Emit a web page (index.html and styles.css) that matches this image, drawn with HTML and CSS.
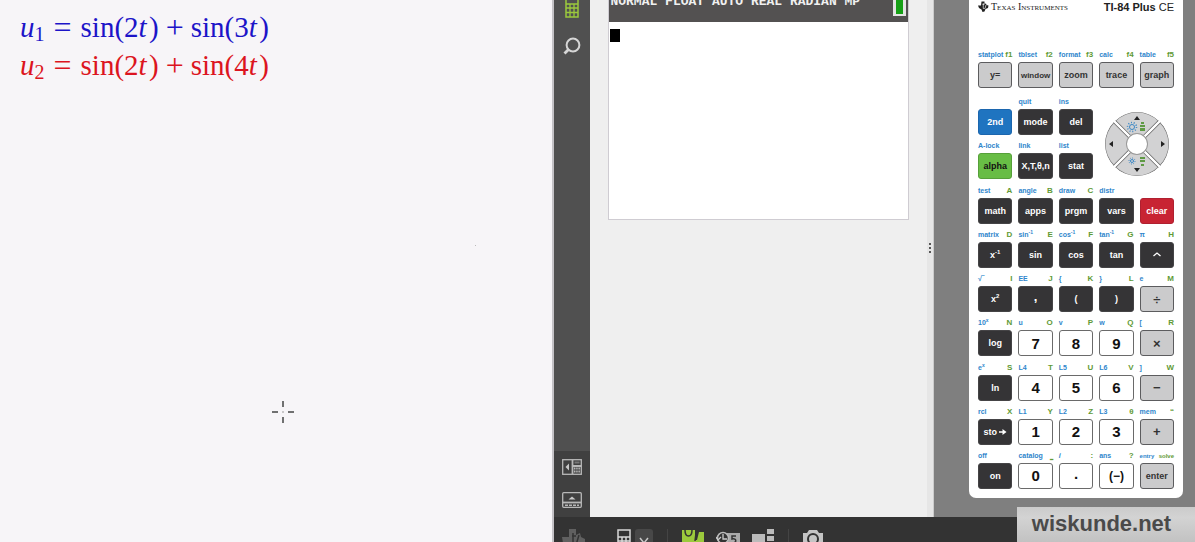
FILE: index.html
```html
<!DOCTYPE html>
<html lang="nl">
<head>
  <meta charset="UTF-8" />
  <title>TI-84 Plus CE - wiskunde.net</title>
  <link rel="stylesheet" href="styles.css">
</head>
<body>
  <!-- Notes -->
  <div class="notes">
    <div class="formula blue">
      <span><i>u</i><sub>1</sub></span><span class="op">=</span><span>sin(2<i>t</i>&#8202;)</span><span class="op plus">+</span><span>sin(3<i>t</i>&#8202;)</span>
    </div>
    <div class="formula red">
      <span><i>u</i><sub>2</sub></span><span class="op">=</span><span>sin(2<i>t</i>&#8202;)</span><span class="op plus">+</span><span>sin(4<i>t</i>&#8202;)</span>
    </div>
    <svg class="crosshair" width="24" height="24" viewBox="0 0 24 24">
      <path d="M12 1v6M12 17v6M1 12h6M17 12h6" stroke="#444" stroke-width="1.5" />
      <circle cx="12" cy="12" r="0.7" fill="#777" />
    </svg>
    <span class="speck"></span>
  </div>

  <!-- Emulator -->
  <div class="emulator">
    <div class="work">
      <div class="sidebar">
        <button class="tool" aria-label="Calculator">
          <svg width="16" height="28" viewBox="0 0 16 28" fill="none" stroke="#9bc93c" stroke-width="1.5">
            <rect x="2" y="1" width="12" height="26" />
            <path d="M2 14h12M2 18h12M2 22.500h12M6 14v13M10 14v13" stroke-width="1.300" />
          </svg>
        </button>
        <button class="tool" aria-label="Zoom">
          <svg width="18" height="18" viewBox="0 0 18 18" fill="none" stroke="#d6d6d6">
            <circle cx="10" cy="8" r="6.400" stroke-width="2" />
            <path d="M5.500 12.500L1.500 16.500" stroke-width="2.800" />
          </svg>
        </button>
        <div class="side-bottom">
          <button class="tool" aria-label="Show keypad">
            <svg width="20" height="16" viewBox="0 0 20 16" fill="none" stroke="#b8b8b8">
              <rect x="0.700" y="0.700" width="18.600" height="14.600" stroke-width="1.300" />
              <path d="M10.500 1v14M10.500 7h9" stroke-width="1.800" />
              <path d="M12.500 3.500h5" stroke-width="2" stroke="#777" />
              <path d="M12 9.500h6M12 12.500h6" stroke-width="2" stroke-dasharray="1.500 0.700" />
              <path d="M7 4.500v7L3.500 8z" fill="#c8c8c8" stroke="none" />
            </svg>
          </button>
          <button class="tool" aria-label="Show key history">
            <svg width="20" height="16" viewBox="0 0 20 16" fill="none" stroke="#b8b8b8">
              <rect x="0.700" y="0.700" width="18.600" height="14.600" rx="1" stroke-width="1.300" />
              <path d="M1 10.500h18" stroke-width="1.800" />
              <path d="M3 13.300h14" stroke-width="1.500" stroke-dasharray="3 1" />
              <path d="M6.500 7.500h7L10 4.500z" fill="#c8c8c8" stroke="none" />
            </svg>
          </button>
        </div>
      </div>

      <div class="stage">
        <div class="screen">
          <div class="status">
            <span class="mode-line">NORMAL FLOAT AUTO REAL RADIAN MP</span>
            <span class="battery"></span>
          </div>
          <div class="home"><span class="cursor"></span></div>
        </div>
      </div>
      <div class="splitter"><i></i><i></i><i></i></div>

      <div class="keypad-pane">
        <div class="calc">
          <div class="brand">
            <svg width="11" height="11" viewBox="0 0 22 22" fill="#222">
              <path d="M7 1h6v5l3-1 1 3 4 1-1 5-5 2-2 5-4 1-2-5-5-3-2-5h6z" />
              <path d="M9 7h4M10.500 4v11h3M16 8l-2 7" stroke="#fff" stroke-width="1.300" fill="none" />
            </svg>
            <span class="maker">Texas Instruments</span>
            <span class="model"><b>TI-84 Plus</b> CE</span>
          </div>

          <div class="keys softkeys">
            <div class="key"><div class="hints"><span>statplot</span><em>f1</em></div><button class="grey">y=</button></div>
            <div class="key"><div class="hints"><span>tblset</span><em>f2</em></div><button class="grey small">window</button></div>
            <div class="key"><div class="hints"><span>format</span><em>f3</em></div><button class="grey">zoom</button></div>
            <div class="key"><div class="hints"><span>calc</span><em>f4</em></div><button class="grey">trace</button></div>
            <div class="key"><div class="hints"><span>table</span><em>f5</em></div><button class="grey">graph</button></div>
          </div>

          <div class="keys keypad">
            <div class="key"><button class="second">2nd</button></div>
            <div class="key"><div class="hints"><span>quit</span></div><button>mode</button></div>
            <div class="key"><div class="hints"><span>ins</span></div><button>del</button></div>
            <div class="dpad">
              <div class="wheel">
                <button aria-label="Up"></button>
                <button aria-label="Right"></button>
                <button aria-label="Left"></button>
                <button aria-label="Down"></button>
              </div>
              <svg class="marks" viewBox="0 0 64 64" fill="#222">
                <path d="M32 4l3 4h-6zM32 60l3-4h-6zM4 32l4-3v6zM60 32l-4-3v6z" />
                <g fill="none" stroke="#3a86c4">
                  <circle cx="27" cy="15" r="2.500" />
                  <circle cx="27" cy="15" r="4.500" stroke-dasharray="1 1.800" stroke-width="1.500" />
                  <circle cx="27" cy="49" r="1.500" />
                  <circle cx="27" cy="49" r="3" stroke-dasharray="1 1.300" />
                </g>
                <path d="M36 10h3v2h-3zM35 13h5v2h-5zM35 16h5v3h-5zM35 45h5v2h-5zM35 48h5v2h-5zM36 52h3v2h-3z" fill="#5f9a45" />
              </svg>
            </div>

            <div class="key"><div class="hints"><span>A-lock</span></div><button class="alpha">alpha</button></div>
            <div class="key"><div class="hints"><span>link</span></div><button>X,T,θ,n</button></div>
            <div class="key"><div class="hints"><span>list</span></div><button>stat</button></div>

            <div class="key"><div class="hints"><span>test</span><em>A</em></div><button>math</button></div>
            <div class="key"><div class="hints"><span>angle</span><em>B</em></div><button>apps</button></div>
            <div class="key"><div class="hints"><span>draw</span><em>C</em></div><button>prgm</button></div>
            <div class="key"><div class="hints"><span>distr</span></div><button>vars</button></div>
            <div class="key"><button class="clear">clear</button></div>

            <div class="key"><div class="hints"><span>matrix</span><em>D</em></div><button>x<sup>-1</sup></button></div>
            <div class="key"><div class="hints"><span>sin<sup>-1</sup></span><em>E</em></div><button>sin</button></div>
            <div class="key"><div class="hints"><span>cos<sup>-1</sup></span><em>F</em></div><button>cos</button></div>
            <div class="key"><div class="hints"><span>tan<sup>-1</sup></span><em>G</em></div><button>tan</button></div>
            <div class="key"><div class="hints"><span>π</span><em>H</em></div><button aria-label="Power"><svg width="10" height="10" viewBox="0 0 10 10"><path d="M1.500 6L5 3l3.500 3" fill="none" stroke="#fff" stroke-width="1.300" /></svg></button></div>

            <div class="key"><div class="hints"><span>√‾</span><em>I</em></div><button>x<sup>2</sup></button></div>
            <div class="key"><div class="hints"><span>EE</span><em>J</em></div><button class="sign raised">,</button></div>
            <div class="key"><div class="hints"><span>{</span><em>K</em></div><button>(</button></div>
            <div class="key"><div class="hints"><span>}</span><em>L</em></div><button>)</button></div>
            <div class="key"><div class="hints"><span>e</span><em>M</em></div><button class="grey sign">÷</button></div>

            <div class="key"><div class="hints"><span>10<sup>x</sup></span><em>N</em></div><button>log</button></div>
            <div class="key"><div class="hints"><span>u</span><em>O</em></div><button class="digit">7</button></div>
            <div class="key"><div class="hints"><span>v</span><em>P</em></div><button class="digit">8</button></div>
            <div class="key"><div class="hints"><span>w</span><em>Q</em></div><button class="digit">9</button></div>
            <div class="key"><div class="hints"><span>[</span><em>R</em></div><button class="grey sign">×</button></div>

            <div class="key"><div class="hints"><span>e<sup>x</sup></span><em>S</em></div><button>ln</button></div>
            <div class="key"><div class="hints"><span>L4</span><em>T</em></div><button class="digit">4</button></div>
            <div class="key"><div class="hints"><span>L5</span><em>U</em></div><button class="digit">5</button></div>
            <div class="key"><div class="hints"><span>L6</span><em>V</em></div><button class="digit">6</button></div>
            <div class="key"><div class="hints"><span>]</span><em>W</em></div><button class="grey sign">−</button></div>

            <div class="key"><div class="hints"><span>rcl</span><em>X</em></div><button class="store">sto<svg width="8" height="8" viewBox="0 0 8 8"><path d="M0 4h4" stroke="#fff" stroke-width="1.500" /><path d="M3.500 1v6L7.500 4z" fill="#fff" /></svg></button></div>
            <div class="key"><div class="hints"><span>L1</span><em>Y</em></div><button class="digit">1</button></div>
            <div class="key"><div class="hints"><span>L2</span><em>Z</em></div><button class="digit">2</button></div>
            <div class="key"><div class="hints"><span>L3</span><em>θ</em></div><button class="digit">3</button></div>
            <div class="key"><div class="hints"><span>mem</span><em>“</em></div><button class="grey sign">+</button></div>

            <div class="key"><div class="hints"><span>off</span></div><button>on</button></div>
            <div class="key"><div class="hints"><span>catalog</span><em>⎵</em></div><button class="digit">0</button></div>
            <div class="key"><div class="hints"><span><i>i</i></span><em>:</em></div><button class="digit raised">.</button></div>
            <div class="key"><div class="hints"><span>ans</span><em>?</em></div><button class="digit negate">(−)</button></div>
            <div class="key"><div class="hints tight"><span>entry</span><em>solve</em></div><button class="grey">enter</button></div>
          </div>
        </div>
      </div>
    </div>

    <!-- Bottom toolbar, runs off the lower edge -->
    <div class="taskbar">
      <svg class="ti" width="24" height="24" viewBox="0 0 24 24" fill="#606060">
        <path d="M7 0h7v6l4-2 1 4 4 2v5l-6 2-2 6-5-3-2-4-7-2-1-6h7z" />
        <path d="M10 7h4M11 4v12M17 6l-3 10" stroke="#333" stroke-width="1.500" />
      </svg>
      <button class="tool" aria-label="Calculator view">
        <svg width="14" height="24" viewBox="0 0 14 24" fill="none" stroke="#d8d8d8" stroke-width="1.500">
          <rect x="1" y="1" width="12" height="22" />
          <path d="M1 8h12M1 12h12M5 8v14M9 8v14" />
        </svg>
      </button>
      <button class="tool drop" aria-label="More views">
        <svg width="18" height="24" viewBox="0 0 18 24"><path d="M5 9l4 5 4-5" fill="none" stroke="#c8c8c8" stroke-width="1.500" /></svg>
      </button>
      <span class="divider"></span>
      <button class="tool" aria-label="Key press history">
        <svg width="22" height="24" viewBox="0 0 22 24">
          <path d="M0 1h13v10h9v13H0z" fill="#9bc93c" />
          <path d="M15 11l2-8h5v8z" fill="#9bc93c" />
          <path d="M3 1c0 8 7 8 7 0M14 4l-1 8" fill="none" stroke="#333" stroke-width="1.500" />
        </svg>
      </button>
      <button class="tool" aria-label="Screen history">
        <svg width="24" height="24" viewBox="0 0 24 24">
          <path d="M11 4h13v18H11z" fill="#aaa" />
          <circle cx="7" cy="9" r="5.500" fill="#333" stroke="#bbb" stroke-width="1.500" />
          <path d="M7 5v5h4M0 8l2 3 3-3" fill="none" stroke="#ccc" stroke-width="1.300" />
          <path d="M20 7h-4v3c5-1 5 4 0 4" fill="none" stroke="#333" stroke-width="1.500" />
        </svg>
      </button>
      <button class="tool" aria-label="Layout">
        <svg width="22" height="24" viewBox="0 0 22 24" fill="#bbb"><path d="M0 5h13v15H0zM15 0h7v5h-7zM15 7h7v5h-7zM15 14h7v5h-7z" /></svg>
      </button>
      <span class="divider"></span>
      <button class="tool" aria-label="Screenshot">
        <svg width="20" height="24" viewBox="0 0 20 24">
          <path d="M0 4h4l2-3h8l2 3h4v16H0z" fill="#c4c4c4" />
          <circle cx="10" cy="10" r="5" fill="none" stroke="#333" stroke-width="2" />
        </svg>
      </button>
    </div>
  </div>

  <div class="watermark">wiskunde.net</div>
</body>
</html>
```
FILE: styles.css
```css
* {
  box-sizing: border-box;
}

body {
  margin: 0;
  height: 100vh;
  display: grid;
  grid-template-columns: 46.4% 1fr;
  overflow: hidden;
  position: relative;
  background: #f7f5f8;
  font-family: "Liberation Sans", Arial, sans-serif;
}

button {
  margin: 0;
  padding: 0;
  border: none;
  background: none;
  font-family: inherit;
  cursor: pointer;
}

svg {
  display: block;
}

/* Notes */
.notes {
  position: relative;
  padding: 8px 20px;
  border-right: 2px solid #c4c2c6;
}

.formula {
  display: flex;
  gap: 9px;
  font-family: "Liberation Serif", "Times New Roman", serif;
  font-size: 29px;
  line-height: 38px;
  white-space: nowrap;
}

.formula sub {
  font-size: 20px;
  line-height: 0;
  vertical-align: -4px;
}

.formula .op {
  font-size: 32px;
}

.formula .plus {
  margin: 0 -2px;
}

.blue {
  color: #1c14c8;
}

.red {
  color: #dc1420;
}

.crosshair {
  position: absolute;
  left: 271px;
  top: 400px;
}

.speck {
  position: absolute;
  left: 475px;
  top: 245px;
  width: 1px;
  height: 1px;
  background: #bbb;
}

/* Emulator */
.emulator {
  display: flex;
  flex-direction: column;
  min-width: 0;
  height: 100vh;
}

.work {
  flex: 1;
  display: flex;
  min-height: 0;
}

.sidebar {
  width: 36px;
  display: flex;
  flex-direction: column;
  align-items: center;
  gap: 19px;
  background: #505050;
}

.sidebar > .tool:first-child {
  margin-top: -10px;
}

.side-bottom {
  width: 100%;
  margin-top: auto;
  padding: 8px 0 9px;
  display: flex;
  flex-direction: column;
  align-items: center;
  gap: 17px;
  background: #404040;
}

.stage {
  flex: 1;
  min-width: 0;
  padding: 0 18px;
  background: #efefef;
}

.screen {
  background: #fff;
  border: 1px solid #cfccd2;
  border-top: none;
}

.status {
  height: 22px;
  padding: 0 2px 0 1px;
  display: flex;
  justify-content: space-between;
  align-items: flex-start;
  overflow: hidden;
  background: #535151;
}

.mode-line {
  margin-top: -7px;
  color: #f0f0f0;
  font-family: "Liberation Mono", monospace;
  font-size: 13px;
  font-weight: bold;
  line-height: 18px;
  white-space: nowrap;
}

.battery {
  width: 13px;
  height: 24px;
  margin-top: -8px;
  border: 3px solid #e4e4e4;
  border-width: 2px 3px;
  background: #16a016;
}

.home {
  height: 197px;
  padding: 7px 1px;
}

.cursor {
  display: block;
  width: 10px;
  height: 13px;
  background: #000;
}

.splitter {
  width: 7px;
  padding-bottom: 22px;
  display: flex;
  flex-direction: column;
  align-items: center;
  justify-content: center;
  gap: 2px;
  border-right: 1px solid #ccc;
  background: #e6e6e6;
}

.splitter i {
  width: 2px;
  height: 2px;
  background: #555;
}

.keypad-pane {
  width: 261px;
  padding: 0 12px 19px 35px;
  display: flex;
  background: #7f7f7f;
}

.calc {
  flex: 1;
  padding: 0 9px 9px;
  display: flex;
  flex-direction: column;
  background: #fff;
  border-radius: 0 0 7px 7px;
}

.brand {
  height: 50px;
  display: flex;
  align-items: flex-start;
  gap: 2px;
  color: #222;
  line-height: 14px;
  white-space: nowrap;
}

.brand svg {
  margin-top: 1px;
}

.maker {
  font-family: "Liberation Serif", serif;
  font-size: 10px;
  font-variant: small-caps;
}

.model {
  margin-left: auto;
  font-size: 11px;
}

.keys {
  display: grid;
  grid-template-columns: repeat(5, 1fr);
  column-gap: 6px;
}

.softkeys {
  margin-bottom: 3px;
}

.keypad {
  flex: 1;
  grid-auto-rows: 1fr;
}

.key {
  min-width: 0;
  display: flex;
  flex-direction: column;
  justify-content: flex-end;
}

.hints {
  height: 12px;
  display: flex;
  justify-content: space-between;
  color: #2f86cc;
  font-size: 7px;
  font-weight: bold;
  line-height: 10px;
  white-space: nowrap;
}

.hints em {
  color: #5f9a35;
  font-size: 8px;
  font-style: normal;
}

.hints sup {
  font-size: 5px;
  line-height: 0;
}

.tight,
.tight em {
  font-size: 6px;
}

.key button {
  height: 26px;
  display: flex;
  align-items: center;
  justify-content: center;
  border: 1px solid #454446;
  border-radius: 3px;
  background: #353436;
  color: #fff;
  font-size: 9px;
  font-weight: bold;
  white-space: nowrap;
}

.key button sup {
  font-size: 6px;
  line-height: 0;
  align-self: flex-start;
  margin-top: 9px;
}

.key .grey {
  border-color: #5c5c5e;
  background: #cbcbcc;
  color: #333;
}

.key .digit {
  border-color: #6a6a6a;
  background: #fff;
  color: #111;
  font-size: 15px;
}

.key .negate {
  font-size: 12px;
}

.key .small {
  font-size: 8px;
}

.key .sign {
  font-size: 13px;
}

.key .raised {
  padding-bottom: 5px;
}

.key .store {
  gap: 2px;
}

.key .second {
  border-color: #1c66ae;
  background: #1f74c0;
}

.key .alpha {
  border-color: #57a03a;
  background: #68bd45;
  color: #111;
}

.key .clear {
  border-color: #b02030;
  background: #c82433;
}

.dpad {
  grid-column: 4 / 6;
  grid-row: 1 / 3;
  align-self: end;
  justify-self: center;
  position: relative;
  width: 64px;
  height: 64px;
  margin-bottom: 3px;
}

.wheel {
  height: 100%;
  display: grid;
  grid-template-columns: 1fr 1fr;
  gap: 2px;
  border-radius: 50%;
  overflow: hidden;
  transform: rotate(45deg);
}

.wheel button {
  border: 1px solid #777;
  background: #d2d2d3;
}

.wheel button:nth-child(1) {
  border-radius: 100% 0 0 0;
}

.wheel button:nth-child(2) {
  border-radius: 0 100% 0 0;
}

.wheel button:nth-child(3) {
  border-radius: 0 0 0 100%;
}

.wheel button:nth-child(4) {
  border-radius: 0 0 100% 0;
}

.wheel::after {
  content: "";
  position: absolute;
  inset: 21px;
  border: 1px solid #999;
  border-radius: 50%;
  background: #fff;
}

.marks {
  position: absolute;
  inset: 0;
  pointer-events: none;
}

/* Bottom toolbar */
.taskbar {
  height: 25px;
  padding: 12px 8px 0;
  display: flex;
  gap: 12px;
  overflow: hidden;
  background: #333;
}

.taskbar .ti {
  margin-right: 19px;
}

.taskbar .tool {
  height: 24px;
}

.drop {
  margin-left: -8px;
  border-radius: 3px 3px 0 0;
  background: #484848;
}

.divider {
  width: 1px;
  height: 24px;
  margin: 0 2px;
  background: #444;
}

.watermark {
  position: absolute;
  right: 0;
  bottom: 0;
  width: 178px;
  height: 35px;
  padding-right: 9px;
  background: linear-gradient(#cbcbcb, #d3d3d3 30%, #c2c2c2);
  color: #4a4a4a;
  font-size: 22px;
  font-weight: bold;
  line-height: 33px;
  text-align: center;
}
```
